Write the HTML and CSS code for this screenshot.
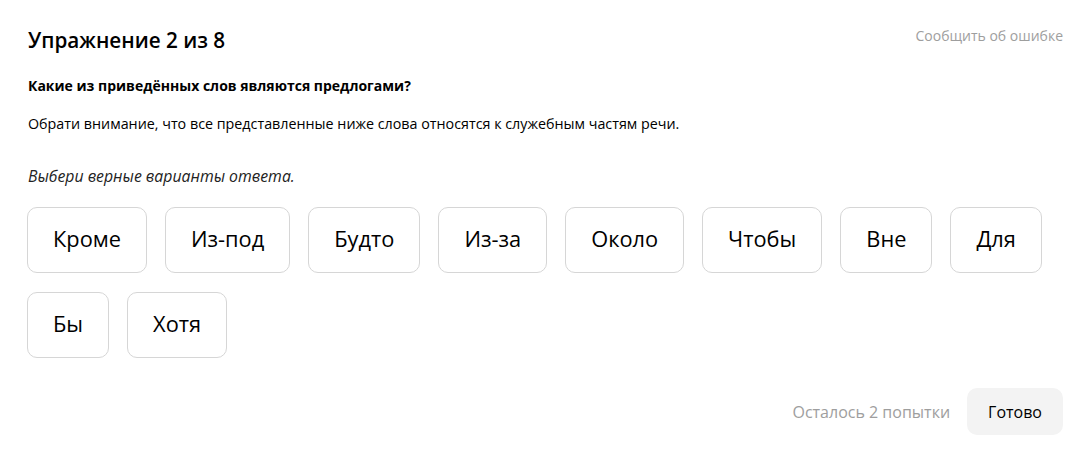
FILE: index.html
```html
<!DOCTYPE html>
<html lang="ru">
<head>
<meta charset="utf-8">
<link rel="stylesheet" href="styles.css">
</head>
<body>
<div class="card">
  <div class="top">
    <h1 class="title">Упражнение 2 из 8</h1>
    <a class="report">Сообщить об ошибке</a>
  </div>
  <p class="question">Какие из приведённых слов являются предлогами?</p>
  <p class="note">Обрати внимание, что все представленные ниже слова относятся к служебным частям речи.</p>
  <p class="hint">Выбери верные варианты ответа.</p>
  <div class="options">
    <button class="chip">Кроме</button>
    <button class="chip">Из-под</button>
    <button class="chip">Будто</button>
    <button class="chip">Из-за</button>
    <button class="chip">Около</button>
    <button class="chip">Чтобы</button>
    <button class="chip">Вне</button>
    <button class="chip">Для</button>
    <button class="chip">Бы</button>
    <button class="chip">Хотя</button>
  </div>
  <div class="footer">
    <span class="attempts">Осталось 2 попытки</span>
    <button class="done">Готово</button>
  </div>
</div>
</body>
</html>
```

FILE: styles.css
```css
html, body {
  margin: 0;
  padding: 0;
  background: #fff;
}
body {
  font-family: "Open Sans", "Noto Sans", sans-serif;
  color: #000;
}
.card {
  width: 1090px;
  height: 460px;
  box-sizing: border-box;
  padding: 24px 27px 0 28px;
}
.top {
  display: flex;
  justify-content: space-between;
  align-items: flex-start;
}
.title {
  margin: 0;
  font-size: 20.7px;
  font-weight: 600;
  line-height: 32px;
}
.report {
  font-size: 14px;
  color: #9e9e9e;
  line-height: 22px;
  margin-top: 1px;
}
.question {
  margin: 19px 0 0;
  font-size: 14px;
  font-weight: 700;
  line-height: 22px;
}
.note {
  margin: 16px 0 0;
  font-size: 14.3px;
  line-height: 22px;
}
.hint {
  margin: 29px 0 0;
  font-size: 15.8px;
  font-style: italic;
  line-height: 24px;
  color: #222;
}
.options {
  display: flex;
  flex-wrap: wrap;
  gap: 19px 18px;
  margin-top: 19px;
  margin-left: -1px;
  width: 1040px;
}
.chip {
  box-sizing: border-box;
  height: 66px;
  padding: 0 25px 4px;
  border: 1px solid #d6d6d6;
  border-radius: 10px;
  background: #fff;
  font-family: inherit;
  font-size: 21.8px;
  color: #000;
}
.footer {
  display: flex;
  justify-content: flex-end;
  align-items: center;
  gap: 17px;
  margin-top: 30px;
}
.attempts {
  font-size: 16px;
  color: #9e9e9e;
}
.done {
  height: 47px;
  padding: 0 21px;
  border: none;
  border-radius: 10px;
  background: #f3f3f3;
  font-family: inherit;
  font-size: 16px;
  color: #000;
}
```
